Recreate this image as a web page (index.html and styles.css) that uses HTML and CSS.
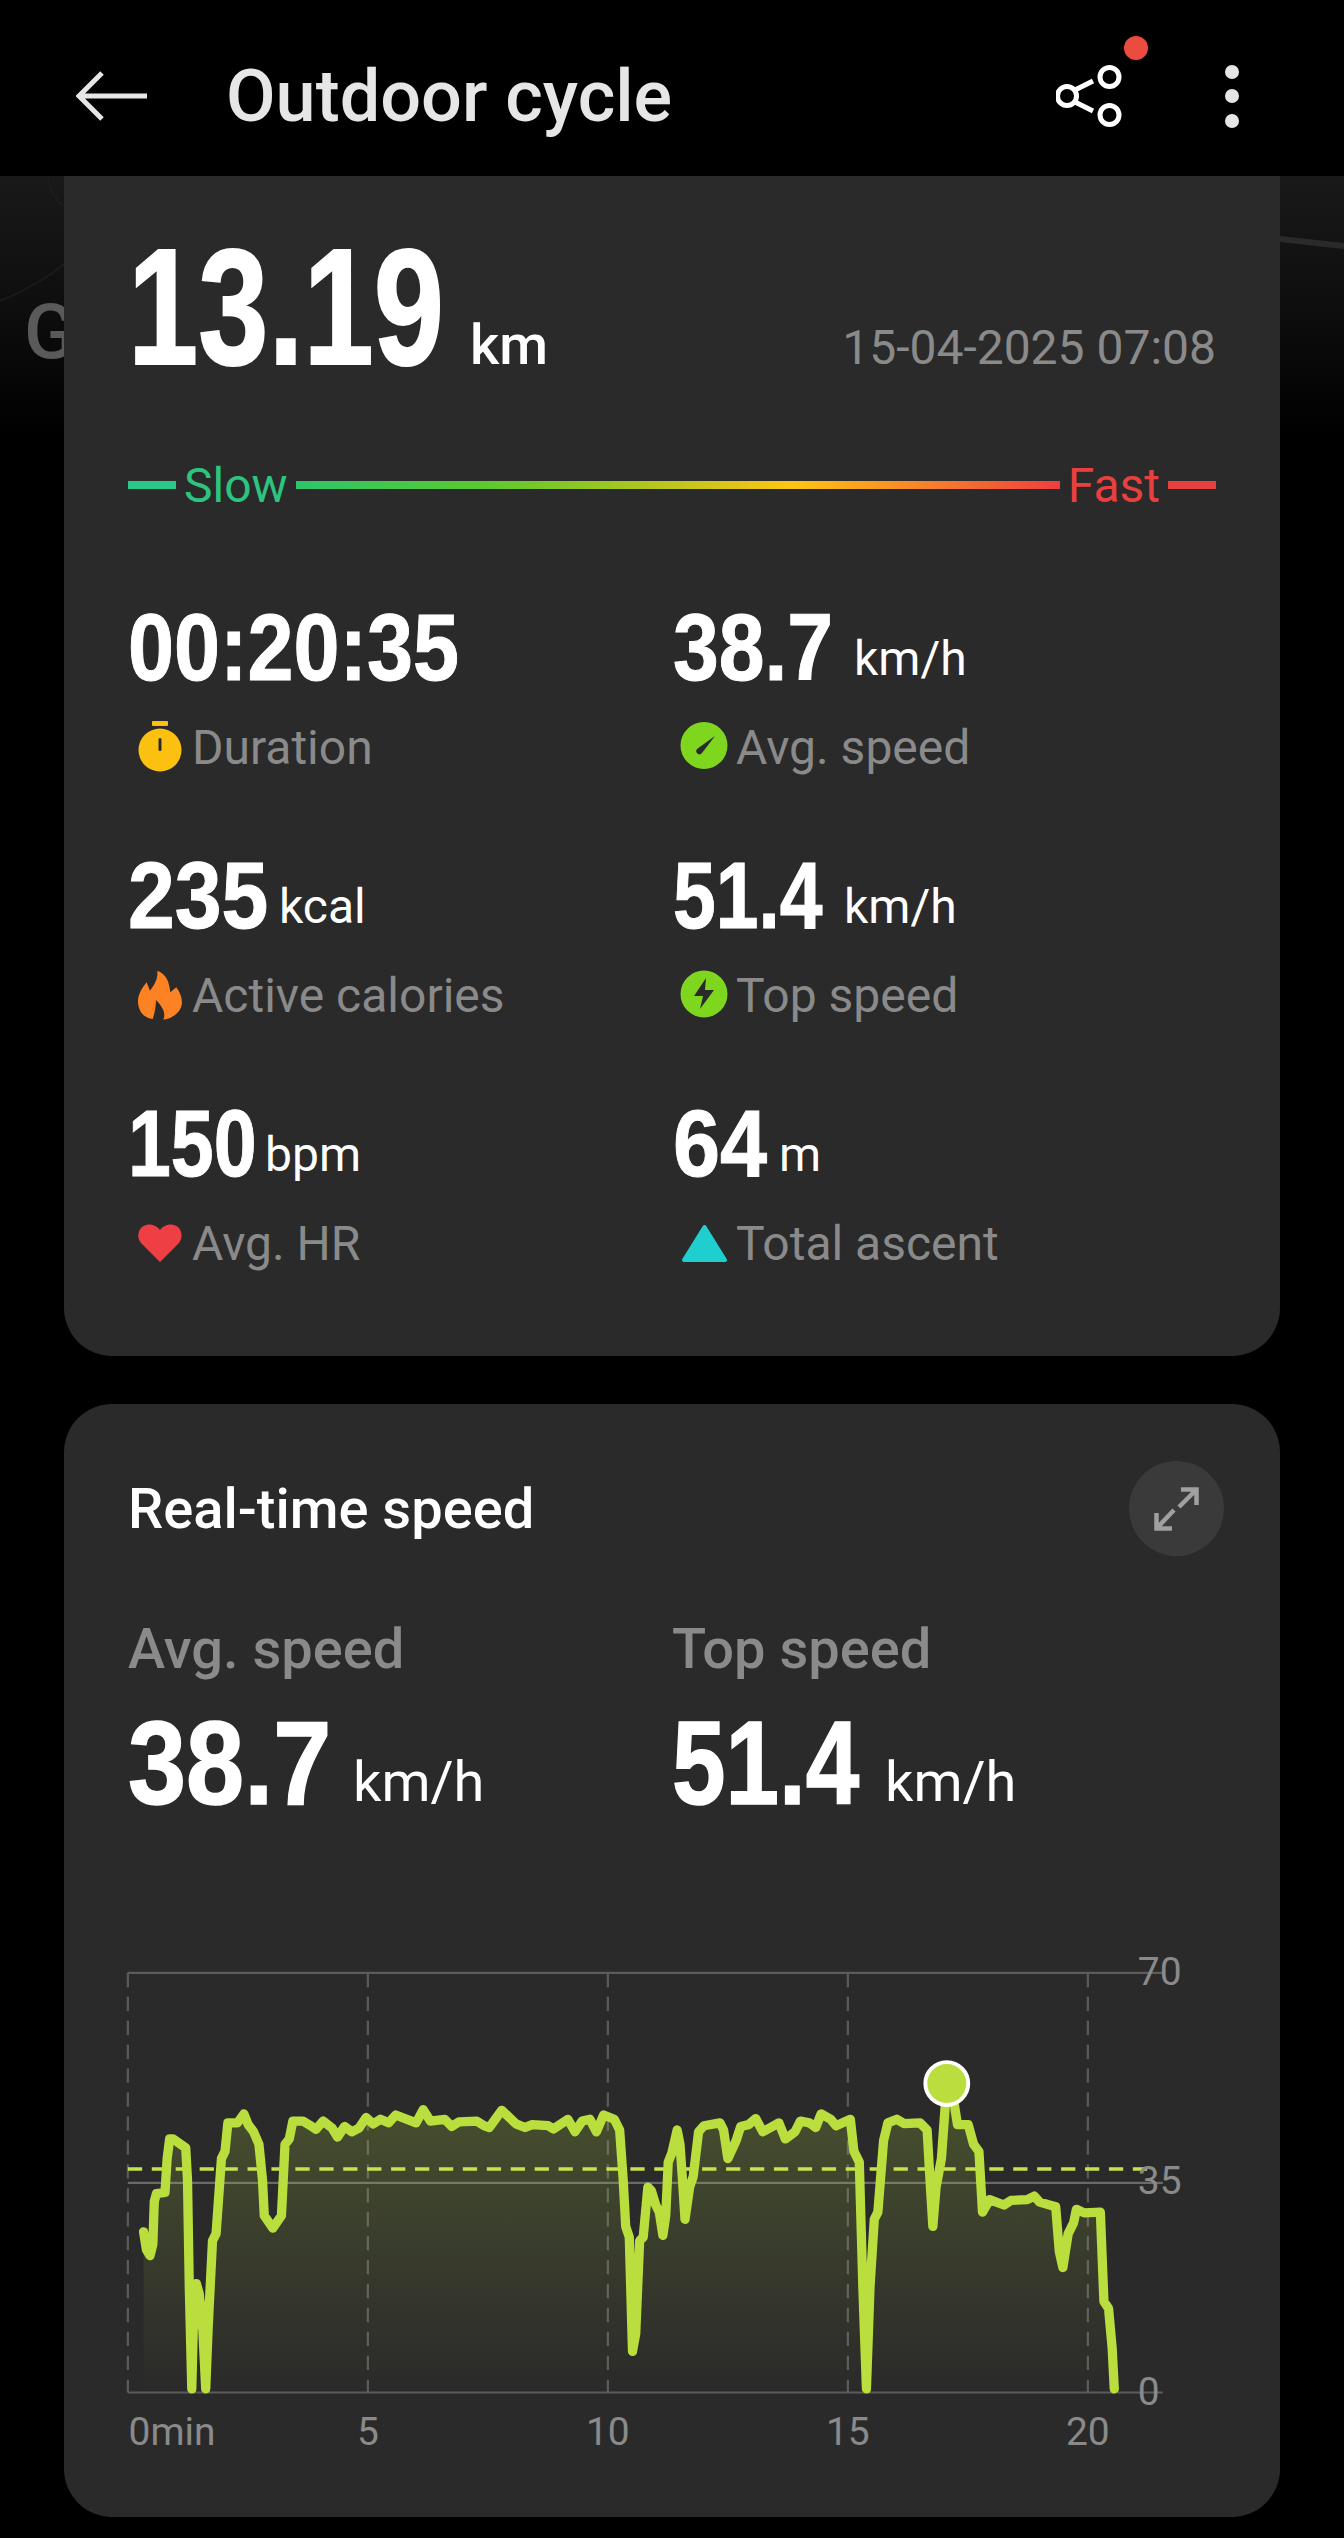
FILE: index.html
```html
<!DOCTYPE html>
<html lang="en">
<head>
    <meta charset="UTF-8">
    <meta name="viewport" content="width=device-width, initial-scale=1.0">
    <title>Outdoor cycle</title>
    <link rel="stylesheet" href="styles.css">
</head>
<body>
    <header class="topbar">
        <svg class="back-icon" width="72" height="52" viewBox="0 0 72 52">
            <path d="M26 3 L3 26 L26 49 M3 26 H71" fill="none" stroke="#e6e6e6" stroke-width="5"/>
        </svg>
        <h1 class="title">Outdoor cycle</h1>
        <div class="share">
            <svg width="72" height="64" viewBox="0 0 72 64">
                <path d="M17 27 L37 17 M17 37 L37 47" stroke="#fff" stroke-width="5"/>
                <circle cx="11" cy="32" r="9.500" fill="none" stroke="#fff" stroke-width="5"/>
                <circle cx="53.500" cy="13" r="9.500" fill="none" stroke="#fff" stroke-width="5"/>
                <circle cx="53.500" cy="51" r="9.500" fill="none" stroke="#fff" stroke-width="5"/>
            </svg>
            <span class="share-dot"></span>
        </div>
        <div class="more">
            <span></span><span></span><span></span>
        </div>
    </header>

    <div class="map">
        <span class="map-g">G</span>
        <svg class="map-roads" width="1344" height="240" viewBox="0 0 1344 240">
            <path d="M1280 63 L1344 70" stroke="#2a2a2a" stroke-width="6" fill="none"/>
            <path d="M0 125 C25 115 50 100 64 88" stroke="#1b1b1b" stroke-width="2" fill="none"/>
            <path d="M48 0 C50 15 56 25 64 30" stroke="#1d1d1d" stroke-width="2" fill="none"/>
        </svg>
    </div>

    <main class="content">
        <section class="card summary">
            <div class="distance-row">
                <div class="value"><span class="num num-xl n-dist">13.19</span><span class="distance-unit">km</span></div>
                <div class="date">15-04-2025 07:08</div>
            </div>

            <div class="pace">
                <span class="pace-dash slow"></span>
                <span class="pace-label slow-text">Slow</span>
                <span class="pace-bar"></span>
                <span class="pace-label fast-text">Fast</span>
                <span class="pace-dash fast"></span>
            </div>

            <div class="stats">
                <div class="stat">
                    <div class="value"><span class="num n-time">00:20:35</span></div>
                    <div class="label">
                        <svg class="icon" width="64" height="56" viewBox="0 0 64 56">
                            <rect x="24" y="1" width="16" height="5" rx="1" fill="#fcc110"/>
                            <circle cx="32" cy="30" r="21.500" fill="#fcc110"/>
                            <rect x="30.500" y="18" width="3" height="13" rx="1.500" fill="#2a2a2a"/>
                        </svg>
                        Duration
                    </div>
                </div>
                <div class="stat">
                    <div class="value"><span class="num n-avg">38.7</span><span class="unit">km/h</span></div>
                    <div class="label">
                        <svg class="icon" width="64" height="56" viewBox="0 0 64 56">
                            <circle cx="31" cy="25.500" r="23.500" fill="#7fd61e"/>
                            <path d="M42 16 L29 33 A3 3 0 0 1 24 29 Z" fill="#2a2a2a"/>
                        </svg>
                        Avg. speed
                    </div>
                </div>
                <div class="stat">
                    <div class="value"><span class="num n-kcal">235</span><span class="unit">kcal</span></div>
                    <div class="label">
                        <svg class="icon" width="64" height="56" viewBox="0 0 64 56">
                            <path transform="translate(2 -4) scale(.333)" d="M82 20 C110 30 118 55 121 85 L139 70 C150 85 156 100 156 115 C156 145 125 165 100 167 C108 150 100 130 78 108 C78 130 72 155 68 165 C40 162 24 140 24 112 C24 90 38 70 50 55 L60 80 C72 65 85 45 82 20 Z" fill="#fd8224"/>
                        </svg>
                        Active calories
                    </div>
                </div>
                <div class="stat">
                    <div class="value"><span class="num n-top">51.4</span><span class="unit">km/h</span></div>
                    <div class="label">
                        <svg class="icon" width="64" height="56" viewBox="0 0 64 56">
                            <circle cx="31" cy="26" r="23.500" fill="#7fd61e"/>
                            <path d="M33 10 L21 28 H30 L27 41 L41 22 H32 Z" fill="#2a2a2a"/>
                        </svg>
                        Top speed
                    </div>
                </div>
                <div class="stat">
                    <div class="value"><span class="num n-hr">150</span><span class="unit">bpm</span></div>
                    <div class="label">
                        <svg class="icon" width="64" height="56" viewBox="0 0 64 56">
                            <path d="M32 46 L13 27 C8 21 10 9 21 8.500 C26 8.500 30 11 32 14 C34 11 38 8.500 43 8.500 C54 9 56 21 51 27 Z" fill="#ee3f44"/>
                        </svg>
                        Avg. HR
                    </div>
                </div>
                <div class="stat">
                    <div class="value"><span class="num n-asc">64</span><span class="unit">m</span></div>
                    <div class="label">
                        <svg class="icon" width="64" height="56" viewBox="0 0 64 56">
                            <path d="M31.500 11 L52 44 H11 Z" fill="#1fcfd0" stroke="#1fcfd0" stroke-width="4" stroke-linejoin="round"/>
                        </svg>
                        Total ascent
                    </div>
                </div>
            </div>
        </section>

        <section class="card speed">
            <div class="speed-head">
                <h2 class="speed-title">Real-time speed</h2>
                <div class="expand">
                    <svg width="95" height="95" viewBox="0 0 95 95">
                        <path d="M52 28.500 H67.500 V44 M67.500 28.500 L50 46 M43 67.500 H27.500 V52 M27.500 67.500 L45 49" fill="none" stroke="#a0a0a0" stroke-width="4.500"/>
                    </svg>
                </div>
            </div>

            <div class="speed-stats">
                <div class="speed-stat">
                    <div class="speed-label">Avg. speed</div>
                    <div class="value speed-value"><span class="num num-lg n-avg-lg">38.7</span><span class="speed-unit">km/h</span></div>
                </div>
                <div class="speed-stat">
                    <div class="speed-label">Top speed</div>
                    <div class="value speed-value"><span class="num num-lg n-top-lg">51.4</span><span class="speed-unit">km/h</span></div>
                </div>
            </div>

            <svg class="chart" width="1100" height="560" viewBox="0 0 3080 1568">
                <defs>
                    <linearGradient id="area-fade" x1="0" y1="500" x2="0" y2="1295" gradientUnits="userSpaceOnUse">
                        <stop offset="0" stop-color="#bade3e" stop-opacity=".2"/>
                        <stop offset="1" stop-color="#bade3e" stop-opacity="0"/>
                    </linearGradient>
                </defs>

                <g class="grid-h">
                    <path d="M78 120 H2976"/>
                    <path class="grid-mid" d="M78 708 H2976"/>
                    <path d="M78 1295 H2976"/>
                </g>
                <g class="grid-v">
                    <path d="M78 120 V1295"/>
                    <path d="M750 120 V1295"/>
                    <path d="M1422 120 V1295"/>
                    <path d="M2094 120 V1295"/>
                    <path d="M2766 120 V1295"/>
                </g>

                <polygon fill="url(#area-fade)" points="122,1295 122,845 130,895 140,912 148,880 152,760 158,738 182,735 188,640 195,585 205,585 240,610 245,700 250,1000 257,1290 264,1000 270,990 278,1020 288,1120 296,1290 303,1110 315,870 325,850 340,640 350,620 358,540 385,540 403,515 415,545 430,565 445,600 455,700 460,800 484,835 508,800 518,600 530,585 540,535 568,535 585,545 605,558 625,535 650,555 665,580 685,550 705,565 725,555 745,525 765,543 785,530 808,540 828,518 885,540 905,503 925,535 965,530 985,550 1005,537 1055,535 1075,548 1090,553 1125,505 1165,543 1190,553 1210,545 1255,548 1270,557 1310,530 1330,565 1350,535 1372,530 1390,565 1410,518 1440,530 1455,560 1465,700 1472,830 1482,860 1491,1180 1500,1130 1511,870 1521,860 1534,720 1544,730 1556,770 1566,790 1576,855 1584,800 1591,650 1601,625 1616,560 1624,600 1631,700 1638,810 1651,720 1661,690 1676,565 1691,548 1736,540 1746,560 1758,640 1781,590 1794,550 1816,545 1836,528 1856,565 1901,540 1919,585 1946,565 1961,535 1986,540 2004,553 2019,515 2046,530 2061,548 2101,530 2111,620 2126,650 2136,1000 2146,1290 2156,1000 2168,810 2178,790 2194,590 2206,540 2231,530 2251,542 2296,540 2316,560 2324,700 2332,830 2341,720 2356,640 2371,430 2386,450 2401,545 2431,545 2446,600 2461,620 2471,790 2491,755 2531,770 2551,757 2596,755 2616,745 2631,762 2676,775 2686,900 2696,945 2711,850 2726,820 2734,782 2756,792 2801,790 2811,1040 2824,1060 2834,1170 2840,1295"/>

                <path class="avg-line" d="M78 669 H2936"/>

                <polyline class="speed-line" points="122,845 130,895 140,912 148,880 152,760 158,738 182,735 188,640 195,585 205,585 240,610 245,700 250,1000 257,1285 264,1000 270,990 278,1020 288,1120 296,1285 303,1110 315,870 325,850 340,640 350,620 358,540 385,540 403,515 415,545 430,565 445,600 455,700 460,800 484,835 508,800 518,600 530,585 540,535 568,535 585,545 605,558 625,535 650,555 665,580 685,550 705,565 725,555 745,525 765,543 785,530 808,540 828,518 885,540 905,503 925,535 965,530 985,550 1005,537 1055,535 1075,548 1090,553 1125,505 1165,543 1190,553 1210,545 1255,548 1270,557 1310,530 1330,565 1350,535 1372,530 1390,565 1410,518 1440,530 1455,560 1465,700 1472,830 1482,860 1491,1180 1500,1130 1511,870 1521,860 1534,720 1544,730 1556,770 1566,790 1576,855 1584,800 1591,650 1601,625 1616,560 1624,600 1631,700 1638,810 1651,720 1661,690 1676,565 1691,548 1736,540 1746,560 1758,640 1781,590 1794,550 1816,545 1836,528 1856,565 1901,540 1919,585 1946,565 1961,535 1986,540 2004,553 2019,515 2046,530 2061,548 2101,530 2111,620 2126,650 2136,1000 2146,1285 2156,1000 2168,810 2178,790 2194,590 2206,540 2231,530 2251,542 2296,540 2316,560 2324,700 2332,830 2341,720 2356,640 2371,430 2386,450 2401,545 2431,545 2446,600 2461,620 2471,790 2491,755 2531,770 2551,757 2596,755 2616,745 2631,762 2676,775 2686,900 2696,945 2711,850 2726,820 2734,782 2756,792 2801,790 2811,1040 2824,1060 2834,1170 2840,1285"/>

                <circle cx="2371" cy="430" r="60" fill="#bade3e" stroke="#fff" stroke-width="11"/>

                <g class="axis-text">
                    <text x="80" y="1442">0min</text>
                    <text x="750" y="1442" text-anchor="middle">5</text>
                    <text x="1422" y="1442" text-anchor="middle">10</text>
                    <text x="2094" y="1442" text-anchor="middle">15</text>
                    <text x="2766" y="1442" text-anchor="middle">20</text>
                    <text x="2906" y="155">70</text>
                    <text x="2906" y="740">35</text>
                    <text x="2906" y="1330">0</text>
                </g>
            </svg>
        </section>
    </main>
</body>
</html>
```

FILE: styles.css
```css
* {
    box-sizing: border-box;
}
body {
    margin: 0;
    height: 2538px;
    overflow: hidden;
    position: relative;
    background-color: #000;
    font-family: Roboto, sans-serif;
    color: #fff;
}

/* barra superior */
.topbar {
    position: relative;
    z-index: 2;
    height: 176px;
    padding-top: 16px;
    display: flex;
    align-items: center;
    background-color: #000;
}
.back-icon {
    margin-left: 76px;
}
.title {
    margin: 0 0 0 78px;
    font-size: 72px;
    font-weight: 500;
    color: #e6e6e6;
    flex: 1;
}
.share {
    position: relative;
    width: 72px;
    height: 64px;
    margin-right: 97px;
}
.share svg {
    display: block;
}
.share-dot {
    position: absolute;
    left: 68px;
    top: -28px;
    width: 24px;
    height: 24px;
    border-radius: 50%;
    background-color: #ec4c40;
}
.more {
    display: flex;
    flex-direction: column;
    gap: 10.500px;
    margin-right: 105px;
}
.more span {
    width: 14px;
    height: 14px;
    border-radius: 50%;
    background-color: #e6e6e6;
}

/* mapa detras de la tarjeta */
.map {
    position: absolute;
    top: 176px;
    left: 0;
    width: 100%;
    height: 260px;
    background: linear-gradient(#191919, #0e0e0e 50%, #000);
}
.map-roads {
    position: absolute;
    top: 0;
    left: 0;
}
.map-g {
    position: absolute;
    left: 24px;
    top: 113px;
    font-size: 76px;
    font-weight: 500;
    line-height: 86px;
    color: #5a5a5a;
}

.content {
    position: relative;
    padding: 0 64px;
}
.card {
    background-color: #2a2a2a;
    border-radius: 0 0 48px 48px;
}

/* numeros: no hay fuente condensada, se comprimen a mano */
.value {
    display: flex;
    align-items: baseline;
    white-space: nowrap;
}
.num {
    display: inline-block;
    flex: none;
    font-family: "Liberation Sans", sans-serif;
    font-weight: 700;
    font-size: 94px;
    line-height: 94px;
    transform-origin: left center;
    -webkit-text-stroke: 1px #fff;
}
.num-xl {
    font-size: 165px;
    line-height: 165px;
    -webkit-text-stroke: 2px #fff;
}
.num-lg {
    font-size: 118px;
    line-height: 118px;
    -webkit-text-stroke: 1.500px #fff;
}
.n-dist {
    width: 342px;
    transform: scaleX(.765);
}
.n-time {
    width: 330px;
    transform: scaleX(.88);
}
.n-avg {
    width: 181px;
    transform: scaleX(.875);
}
.n-top {
    width: 171px;
    transform: scaleX(.817);
}
.n-kcal {
    width: 151px;
    transform: scaleX(.895);
}
.n-hr {
    width: 137px;
    transform: scaleX(.82);
}
.n-asc {
    width: 106px;
    transform: scaleX(.9);
}
.n-avg-lg {
    width: 225px;
    transform: scaleX(.885);
}
.n-top-lg {
    width: 213px;
    transform: scaleX(.815);
}

/* resumen */
.summary {
    height: 1180px;
    padding: 49px 64px 0;
}
.distance-row {
    display: flex;
    justify-content: space-between;
    align-items: baseline;
}
.distance-unit {
    font-size: 56px;
    font-weight: 500;
}
.date {
    font-size: 48px;
    color: #8a8a8a;
}
.pace {
    display: flex;
    align-items: center;
    height: 56px;
    margin-top: 67px;
}
.pace-dash {
    width: 48px;
    height: 8px;
}
.pace-dash.slow {
    background-color: #2ac78a;
}
.pace-dash.fast {
    background-color: #e8403f;
}
.pace-label {
    font-size: 48px;
    margin: 0 8px;
}
.slow-text {
    color: #2cc47f;
}
.fast-text {
    color: #e8403f;
}
.pace-bar {
    flex: 1;
    height: 8px;
    background: linear-gradient(90deg, #2cc56b, #5cc92c 25%, #ffc414 65%, #ee3e40);
}
.stats {
    display: grid;
    grid-template-columns: 545px 1fr;
    row-gap: 73.500px;
    margin-top: 88px;
}
.stat .value {
    height: 94px;
}
.stat:nth-child(even) .icon {
    margin-right: -1px;
}
.unit {
    font-size: 48px;
    transform: translateY(-5px);
}
.label {
    display: flex;
    align-items: center;
    height: 56px;
    margin-top: 24.500px;
    font-size: 48px;
    color: #8a8a8a;
}
.icon {
    flex: none;
}

/* velocidad */
.speed {
    height: 1113px;
    margin-top: 48px;
    padding: 57px 64px 0;
    border-radius: 48px;
}
.speed-head {
    display: flex;
    justify-content: space-between;
    align-items: center;
    height: 95px;
}
.speed-title {
    margin: 0;
    font-size: 56px;
    font-weight: 500;
}
.expand {
    width: 95px;
    height: 95px;
    margin-right: -8px;
    border-radius: 50%;
    background-color: #3a3a3a;
}
.expand svg {
    display: block;
}
.speed-stats {
    display: flex;
    height: 250px;
    margin-top: 61px;
}
.speed-stat {
    width: 544px;
}
.speed-label {
    font-size: 56px;
    font-weight: 500;
    line-height: 64px;
    color: #8a8a8a;
}
.speed-value {
    margin-top: 23px;
}
.speed-unit {
    font-size: 56px;
    transform: translateY(-3px);
}

/* grafica */
.chart {
    display: block;
    margin: 63px 0 0 -28px;
}
.grid-h path {
    fill: none;
    stroke: #5c5c5c;
    stroke-width: 6;
}
.grid-h .grid-mid {
    stroke: #6a6a6a;
}
.grid-v path {
    fill: none;
    stroke: #5c5c5c;
    stroke-width: 6;
    stroke-dasharray: 40 27;
}
.avg-line {
    fill: none;
    stroke: #c3e34b;
    stroke-width: 10;
    stroke-dasharray: 40 27;
}
.speed-line {
    fill: none;
    stroke: #bade3e;
    stroke-width: 26;
    stroke-linejoin: round;
    stroke-linecap: round;
}
.axis-text text {
    font-family: Roboto, sans-serif;
    font-size: 109px;
    fill: #8a8a8a;
}
```
